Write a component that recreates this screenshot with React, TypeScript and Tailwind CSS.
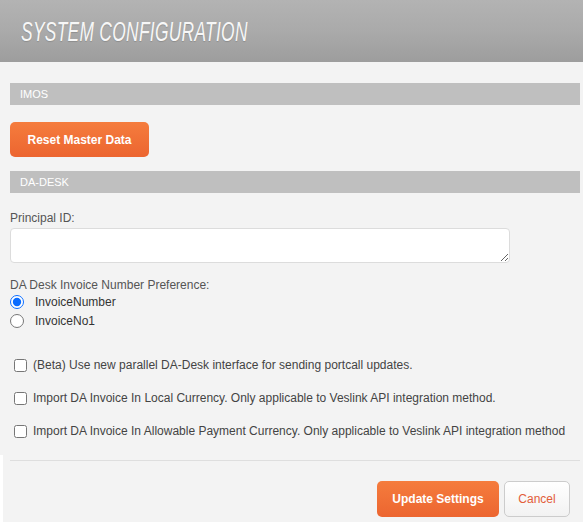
const CHECKS = [
  "(Beta) Use new parallel DA-Desk interface for sending portcall updates.",
  "Import DA Invoice In Local Currency. Only applicable to Veslink API integration method.",
  "Import DA Invoice In Allowable Payment Currency. Only applicable to Veslink API integration method",
];

function SectionBar({ title }: { title: string }) {
  return (
    <div className="h-[22px] w-[570px] bg-[#bfbfbf] pl-[10px] flex items-center text-[11px] text-white">
      {title}
    </div>
  );
}

export default function App() {
  return (
    <div className="w-[583px] h-[522px] bg-[#f3f3f3] overflow-hidden font-['Liberation_Sans',Arial,sans-serif] text-[12px] text-[#444] relative">
      {/* HEADER */}
      <div className="h-[62px] bg-gradient-to-b from-[#b3b3b3] via-[#aaaaaa] to-[#9d9d9d] flex items-center pl-[21px]">
        <span className="inline-block origin-left scale-x-[0.62] italic text-[28px] text-[#f7f7f7] tracking-[0.5px] whitespace-nowrap [text-shadow:0_1px_1px_rgba(0,0,0,0.15)] mt-[2px]">
          SYSTEM CONFIGURATION
        </span>
      </div>

      <div className="pl-[10px]">
        <div className="mt-[21px]">
          <SectionBar title="IMOS" />
        </div>
        <button className="mt-[17px] h-[35px] w-[139px] rounded-[5px] bg-gradient-to-b from-[#f57c3d] to-[#ec6530] text-white font-bold text-[12px]">
          Reset Master Data
        </button>
        <div className="mt-[14px]">
          <SectionBar title="DA-DESK" />
        </div>

        <div className="mt-[18px] text-[#555] leading-[14px]">Principal ID:</div>
        <textarea className="mt-[3px] block w-[500px] h-[35px] bg-white border border-[#dcdcdc] rounded-[4px] resize-y outline-none" />

        <div className="mt-[15px] text-[#555] leading-[14px]">DA Desk Invoice Number Preference:</div>
        <div className="flex flex-col gap-[5px] mt-[3px]">
          {["InvoiceNumber", "InvoiceNo1"].map((label, i) => (
            <label key={label} className="flex items-center h-[14px] text-[#333]">
              <input
                type="radio"
                name="pref"
                defaultChecked={i === 0}
                className="m-0 w-[14px] h-[14px] accent-[#0a6cff]"
              />
              <span className="ml-[11px]">{label}</span>
            </label>
          ))}
        </div>

        <div className="mt-[30px] flex flex-col gap-[19px]">
          {CHECKS.map((text) => (
            <label key={text} className="flex items-center h-[14px] pl-[4px] text-[#444]">
              <input type="checkbox" className="m-0 w-[13px] h-[13px]" />
              <span className="ml-[6px] whitespace-nowrap">{text}</span>
            </label>
          ))}
        </div>

        <div className="mt-[22px] w-[570px] border-t border-[#dedede]" />

        <div className="mt-[20px] w-[560px] flex justify-end gap-[5px]">
          <button className="h-[36px] w-[122px] rounded-[5px] bg-gradient-to-b from-[#f57c3d] to-[#ec6530] text-white font-bold text-[12px]">
            Update Settings
          </button>
          <button className="h-[36px] w-[66px] rounded-[5px] bg-gradient-to-b from-white to-[#f2f2f2] border border-[#cccccc] text-[#e35d3a] text-[12px]">
            Cancel
          </button>
        </div>
      </div>

      <div className="absolute left-0 top-[455px] bottom-0 w-[3px] bg-white" />
    </div>
  );
}
